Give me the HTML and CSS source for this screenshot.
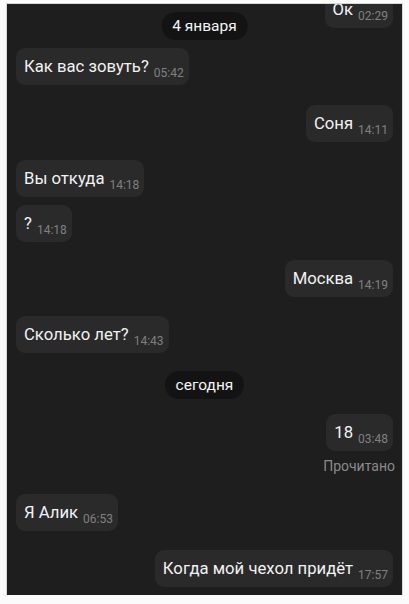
FILE: index.html
```html
<!DOCTYPE html>
<html lang="ru">
<head>
    <meta charset="UTF-8">
    <title>Чат</title>
    <link rel="stylesheet" href="styles.css">
</head>
<body>
<div class="screen">
    <div class="date-sticky">4 января</div>

    <div class="msg out">Ок<span class="time">02:29</span></div>
    <div class="msg in gap-20">Как вас зовуть?<span class="time">05:42</span></div>
    <div class="msg out gap-20">Соня<span class="time">14:11</span></div>
    <div class="msg in gap-18">Вы откуда<span class="time">14:18</span></div>
    <div class="msg in gap-8">?<span class="time">14:18</span></div>
    <div class="msg out gap-18">Москва<span class="time">14:19</span></div>
    <div class="msg in gap-19">Сколько лет?<span class="time">14:43</span></div>
    <div class="date gap-18">сегодня</div>
    <div class="msg out gap-15">18<span class="time">03:48</span></div>
    <div class="status">Прочитано</div>
    <div class="msg in gap-20">Я Алик<span class="time">06:53</span></div>
    <div class="msg out gap-19">Когда мой чехол придёт<span class="time">17:57</span></div>
</div>
</body>
</html>
```

FILE: styles.css
```css
html, body {
    margin: 0;
    background: #fbfbfb;
    font-family: Roboto, "Noto Sans", sans-serif;
}

body {
    padding: 4px 7px 0;
}

.screen {
    position: relative;
    height: 591px;
    box-sizing: border-box;
    padding: 0 9px 8px;
    background: #1e1e1e;
    overflow: hidden;
    display: flex;
    flex-direction: column;
    justify-content: flex-end;
    box-shadow: 0 0 0 1px #d8d8d8;
}

.msg {
    flex-shrink: 0;
    background: #2a2a2a;
    color: #f2f2f2;
    border-radius: 9px;
    font-size: 16.7px;
    line-height: 20px;
    height: 37px;
    box-sizing: border-box;
    padding: 9px 5px 0 8px;
    white-space: nowrap;
}

.msg.in {
    align-self: flex-start;
}

.msg.out {
    align-self: flex-end;
}

.time {
    font-size: 12px;
    line-height: 12px;
    color: #808080;
    margin-left: 5px;
    vertical-align: -5px;
}

.date, .date-sticky {
    flex-shrink: 0;
    align-self: center;
    background: #131313;
    color: #f4f4f4;
    font-size: 15.5px;
    line-height: 28px;
    height: 28px;
    padding: 0 11px;
    border-radius: 14px;
}

.date-sticky {
    position: absolute;
    top: 8px;
    left: 50%;
    transform: translateX(-50%);
}

.status {
    flex-shrink: 0;
    align-self: flex-end;
    margin: 7px -2px 0 0;
    font-size: 14px;
    line-height: 16px;
    color: #8a8a8a;
}

.gap-8 { margin-top: 8px; }
.gap-15 { margin-top: 15px; }
.gap-18 { margin-top: 18px; }
.gap-19 { margin-top: 19px; }
.gap-20 { margin-top: 20px; }
```
